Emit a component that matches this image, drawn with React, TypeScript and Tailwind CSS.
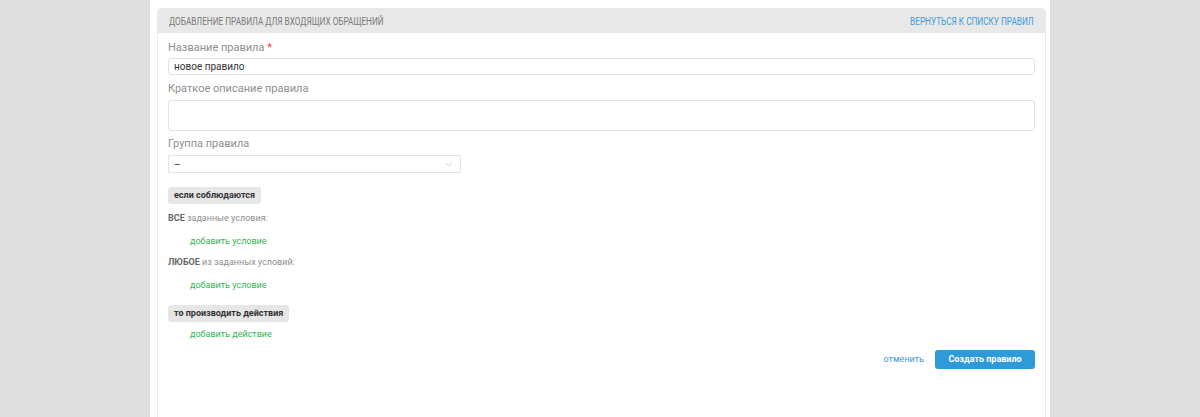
import React from 'react';

const font = { fontFamily: 'Roboto, "Noto Sans", sans-serif' };

function Label({ children, required }: { children: React.ReactNode; required?: boolean }) {
  return (
    <div className="text-[11px] leading-[14px] text-[#8e8e8e]">
      {children}
      {required && <span className="text-[#e74c3c]"> *</span>}
    </div>
  );
}

function Tag({ children }: { children: React.ReactNode }) {
  return (
    <div className="self-start h-[17px] px-[6px] rounded-[3px] bg-[#e6e6e6] text-[9px] font-bold text-[#333] flex items-center">
      {children}
    </div>
  );
}

function AddLink({ children }: { children: React.ReactNode }) {
  return <div className="pl-[22px] text-[9px] leading-[14px] text-[#34b553]">{children}</div>;
}

export default function App() {
  return (
    <div className="w-full h-[417px] bg-[#dfdfdf] flex justify-center overflow-hidden" style={font}>
      <div className="w-[900px] h-[440px] shrink-0 bg-white pt-[8px] pl-[7px] pr-[4px]">
        <div className="h-full border border-[#e9e9e9] rounded-t-[4px] flex flex-col">
          {/* Header */}
          <div className="h-[24px] shrink-0 bg-[#e8e8e8] rounded-t-[3px] flex items-center justify-between px-[11px]">
            <span className="text-[10px] uppercase text-[#7a7a7a] scale-x-[0.82] origin-left whitespace-nowrap">
              Добавление правила для входящих обращений
            </span>
            <span className="text-[10px] uppercase text-[#3a9ad9] scale-x-[0.82] origin-right whitespace-nowrap">
              Вернуться к списку правил
            </span>
          </div>

          {/* Form */}
          <div className="flex flex-col px-[10px]">
            <div className="mt-[8px]">
              <Label required>Название правила</Label>
            </div>
            <div className="mt-[3px] h-[17px] border border-[#e3e3e3] rounded-[3px] px-[5px] flex items-center text-[10px] text-[#333]">
              новое правило
            </div>

            <div className="mt-[7px]">
              <Label>Краткое описание правила</Label>
            </div>
            <div className="mt-[4px] h-[31px] border border-[#e3e3e3] rounded-[3px]" />

            <div className="mt-[6px]">
              <Label>Группа правила</Label>
            </div>
            <div className="mt-[4px] w-[293px] h-[18px] border border-[#e3e3e3] rounded-[2px] px-[5px] flex items-center justify-between text-[10px] text-[#444]">
              <span>–</span>
              <svg width="7" height="5" viewBox="0 0 7 5" className="mr-[3px]">
                <path d="M0.5 1l3 3 3-3" fill="none" stroke="#c8c8c8" strokeWidth="0.9" />
              </svg>
            </div>

            <div className="mt-[14px] flex">
              <Tag>если соблюдаются</Tag>
            </div>

            <div className="mt-[7px] text-[9px] leading-[14px] text-[#8e8e8e]">
              <span className="font-bold text-[#666]">ВСЕ</span> заданные условия:
            </div>
            <div className="mt-[9px]">
              <AddLink>добавить условие</AddLink>
            </div>

            <div className="mt-[7px] text-[9px] leading-[14px] text-[#8e8e8e]">
              <span className="font-bold text-[#666]">ЛЮБОЕ</span> из заданных условий:
            </div>
            <div className="mt-[9px]">
              <AddLink>добавить условие</AddLink>
            </div>

            <div className="mt-[13px] flex">
              <Tag>то производить действия</Tag>
            </div>
            <div className="mt-[5px]">
              <AddLink>добавить действие</AddLink>
            </div>

            <div className="mt-[9px] flex items-center justify-end gap-[11px]">
              <span className="text-[9px] text-[#3a9ad9]">отменить</span>
              <button className="h-[19px] w-[100px] rounded-[3px] bg-[#2f9ad9] text-white text-[9px] font-bold flex items-center justify-center">
                Создать правило
              </button>
            </div>
          </div>
        </div>
      </div>
    </div>
  );
}
